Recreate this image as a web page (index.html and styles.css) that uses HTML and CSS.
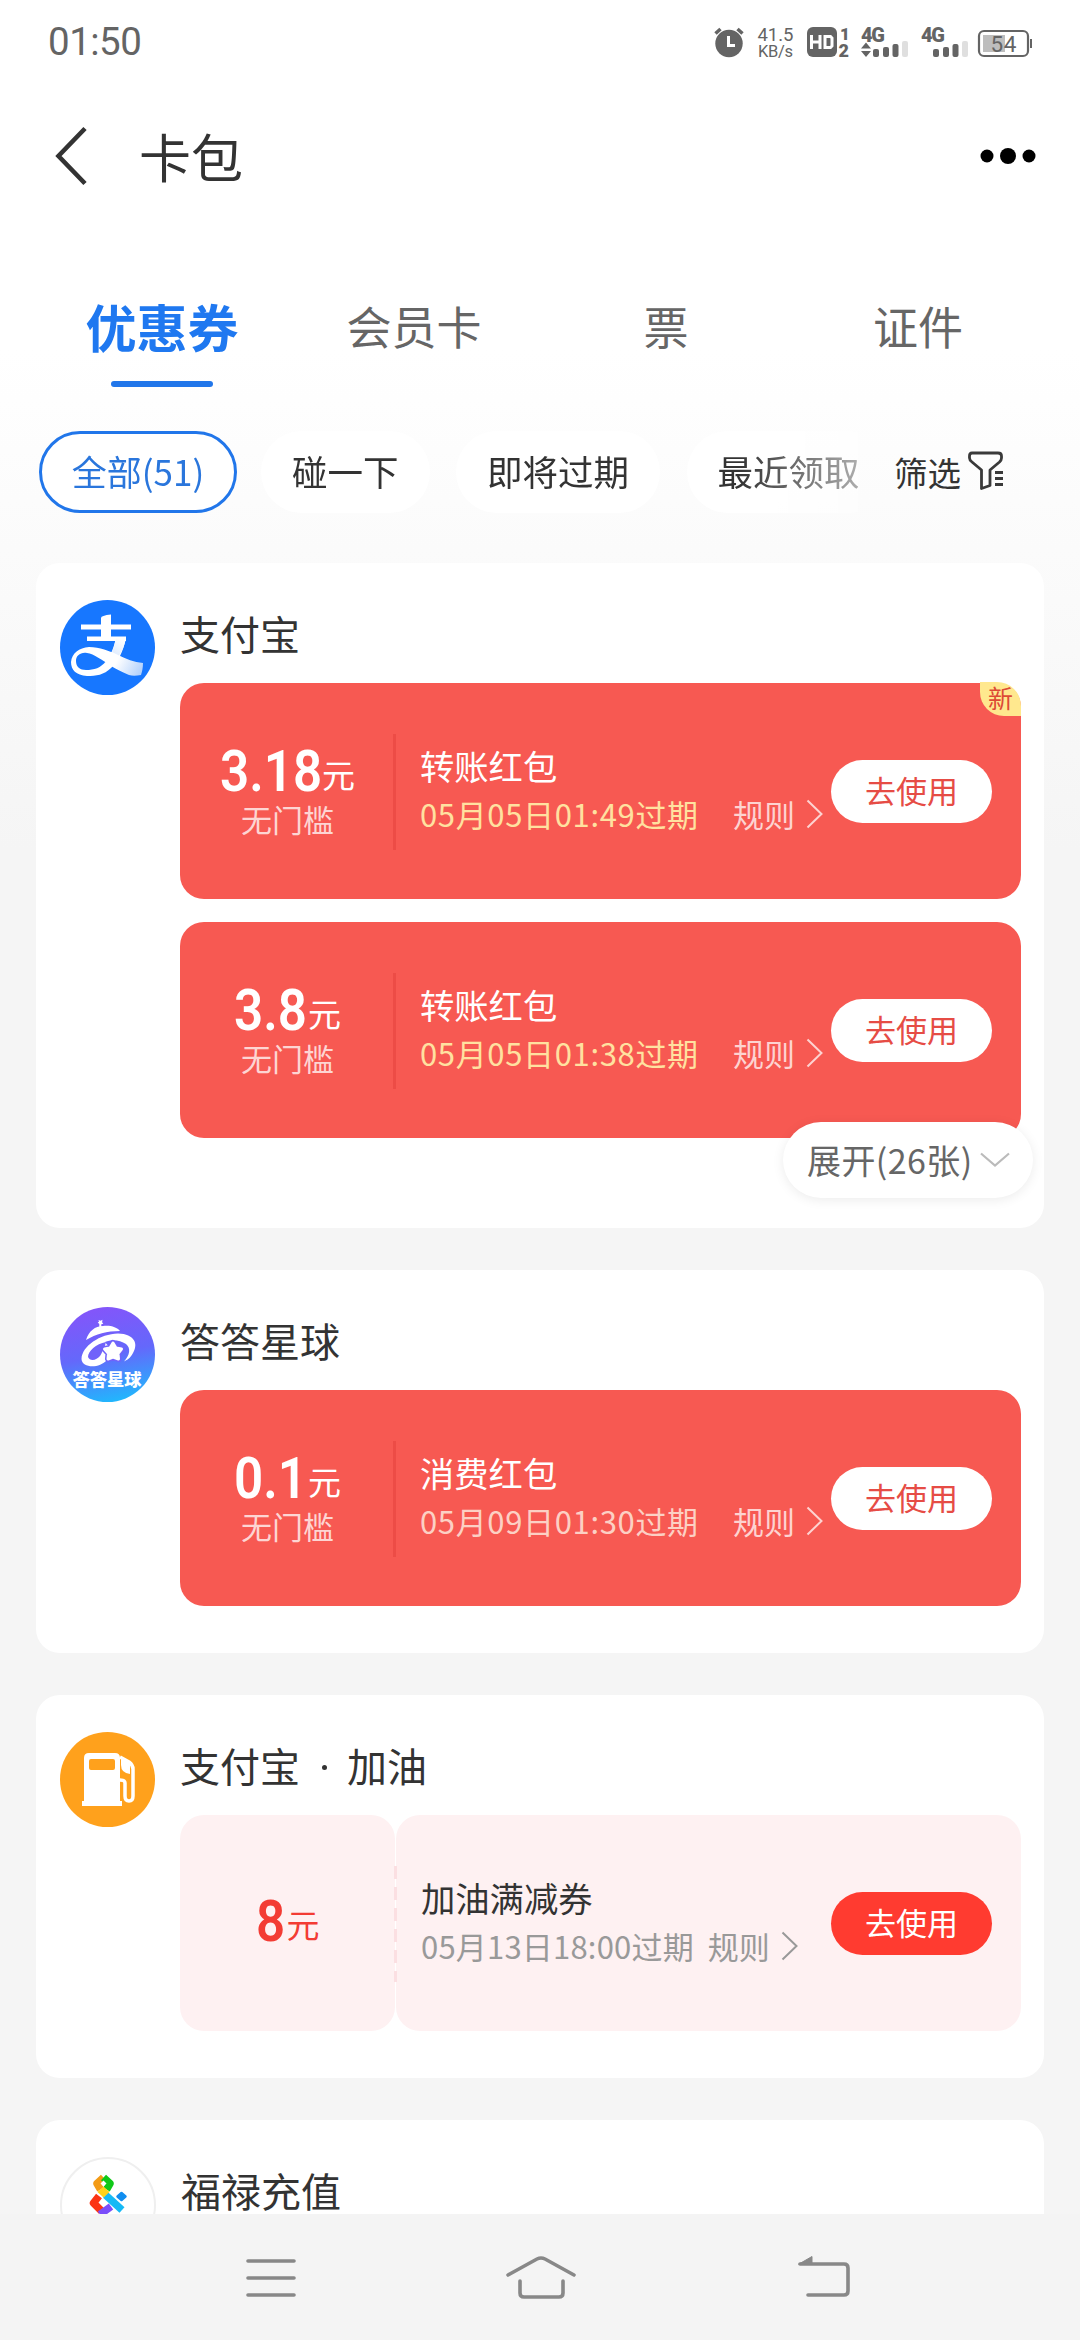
FILE: index.html
```html
<!DOCTYPE html>
<html lang="zh-CN">
<head>
<meta charset="utf-8">
<title>卡包</title>
<link rel="stylesheet" href="styles.css">
</head>
<body>
<div class="screen">
  <div class="statusbar">
    <span class="clock">01:50</span>
    <svg class="status-icons" width="322" height="36" viewBox="712 24 322 36">
      <g fill="#646464">
        <circle cx="729" cy="43.5" r="13.7"/>
        <path d="M715.5 33.5l5-4.500M742.500 33.500l-5-4.500" stroke="#646464" stroke-width="3.500"/>
        <path d="M728.500 36v9.500h6.500" fill="none" stroke="#fff" stroke-width="3"/>
        <text x="757.500" y="41" font-size="18.500" textLength="36">41.5</text>
        <text x="758" y="56.500" font-size="16.500" textLength="35">KB/s</text>
        <rect x="807" y="27" width="30" height="30" rx="6"/>
        <path d="M811.500 35v14M820 35v14M811.500 42h8.500" fill="none" stroke="#fff" stroke-width="3"/>
        <path d="M825 36.500h5.500l1.500 1.500v8l-1.500 1.500H825z" fill="none" stroke="#fff" stroke-width="3"/>
        <text class="heavy" x="840" y="39.500" font-size="17">1</text>
        <text class="heavy" x="838.500" y="56.500" font-size="18">2</text>
        <text class="heavy" x="861" y="41.500" font-size="20" textLength="24">4G</text>
        <path d="M861 48.500l5-6 5 6zM861 51l5 6 5-6z"/>
        <rect x="873" y="49" width="6" height="8" rx="2"/>
        <rect x="883" y="47" width="6" height="10" rx="2"/>
        <rect x="892.500" y="44" width="6" height="13" rx="2"/>
        <rect x="902" y="41" width="6" height="16" rx="2" fill="#dfdfdf"/>
        <text class="heavy" x="921" y="41.500" font-size="20" textLength="24">4G</text>
        <rect x="933" y="49" width="6" height="8" rx="2"/>
        <rect x="943" y="47" width="6" height="10" rx="2"/>
        <rect x="952.500" y="44" width="6" height="13" rx="2"/>
        <rect x="962" y="41" width="6" height="16" rx="2" fill="#dfdfdf"/>
        <rect x="979" y="31" width="49" height="25" rx="5" fill="none" stroke="#646464" stroke-width="2.200"/>
        <rect x="983" y="35" width="22" height="17" fill="#bdbdbd"/>
        <rect x="1030" y="39" width="2" height="9"/>
        <text x="990.500" y="52" font-size="22.500" textLength="26">54</text>
      </g>
    </svg>
  </div>

  <header class="titlebar">
    <svg class="back" width="40" height="60" viewBox="0 0 40 60"><path d="M35 2.500L8.500 30L35 57.500" fill="none" stroke="#333" stroke-width="4.600"/></svg>
    <h1>卡包</h1>
    <svg class="more" width="56" height="18" viewBox="0 0 56 18"><circle cx="7" cy="9" r="6.500"/><circle cx="28" cy="9" r="8"/><circle cx="49" cy="9" r="6.500"/></svg>
  </header>

  <nav class="tabs">
    <div class="tab active">优惠券</div>
    <div class="tab">会员卡</div>
    <div class="tab">票</div>
    <div class="tab">证件</div>
  </nav>

  <div class="filters">
    <div class="chips">
      <div class="chip on">全部(51)</div>
      <div class="chip">碰一下</div>
      <div class="chip">即将过期</div>
      <div class="chip">最近领取</div>
    </div>
    <div class="filter">筛选
      <svg width="38" height="42" viewBox="0 0 38 42" fill="none" stroke="#3a3a3a" stroke-width="2.800"><path d="M5 3h26q3.500 0 3.500 3v2q0 2-2 4L23 20v15.500l-8.500 3V20L5 12Q2.500 10 2.500 8V6Q2.500 3 5 3z" stroke-linejoin="round"/><path d="M28 22.500H36M28 28.500H36M28 34.500H36"/></svg>
    </div>
  </div>

  <main class="list">
    <section class="card with-more">
      <svg class="logo" width="95" height="95" viewBox="0 0 95 95">
        <defs>
          <linearGradient id="tail" x1="40" y1="50" x2="84" y2="74" gradientUnits="userSpaceOnUse"><stop offset="0" stop-color="#fff"/><stop offset=".4" stop-color="#fff"/><stop offset="1" stop-color="#a9cbfb"/></linearGradient>
          <linearGradient id="leg" x1="62" y1="40" x2="40" y2="72" gradientUnits="userSpaceOnUse"><stop offset="0" stop-color="#fff"/><stop offset="1" stop-color="#b5d2fc"/></linearGradient>
        </defs>
        <circle cx="47.500" cy="47.500" r="47.500" fill="#1777ff"/>
        <path d="M41 40.500V18q0-2.500 10-3.500v26zM21 24.500h50v5H21zM27 36.500h39v4.500H27z" fill="#fff"/>
        <path d="M56 38H66C63 52 58 62 51 68C44 75 36 76 27 76C16 75 11 70 11 62C12 53 19 48 29 47C40 47 49 51 58 55C66 59 74 62 83 63C83 68 82 72 81 75C76 76 72 76 69 75C62 72 56 69 51 66C42 60 34 54 27 53C20 52 16 56 16 61C16 67 20 70 26 70C34 70 41 68 46 61C51 55 54 47 56 38Z" fill="url(#tail)"/>
        <path d="M56 38h10q-2.500 12-7 17.500l-7-3.500q2.500-6 4-14z" fill="url(#leg)"/>
      </svg>
      <div class="body">
        <h2>支付宝</h2>
        <div class="coupon red">
          <span class="badge">新</span>
          <div class="value"><div class="amount"><b class="n3">3.18</b>元</div><div class="cond">无门槛</div></div>
          <div class="info"><div class="name">转账红包</div><div class="meta"><span class="date soon">05月05日01:49过期</span><span class="rule">规则<svg width="18" height="30" viewBox="0 0 18 30"><path d="M1.500 1.500L15.500 15l-14 13.500"/></svg></span></div></div>
          <div class="use">去使用</div>
        </div>
        <div class="coupon red">
          <div class="value"><div class="amount"><b class="n2">3.8</b>元</div><div class="cond">无门槛</div></div>
          <div class="info"><div class="name">转账红包</div><div class="meta"><span class="date soon">05月05日01:38过期</span><span class="rule">规则<svg width="18" height="30" viewBox="0 0 18 30"><path d="M1.500 1.500L15.500 15l-14 13.500"/></svg></span></div></div>
          <div class="use">去使用</div>
        </div>
      </div>
      <div class="expand">展开(26张)<svg width="30" height="16" viewBox="0 0 30 16"><path d="M1 1.500L15 13.500L29 1.500" fill="none" stroke="#bbb" stroke-width="2.200"/></svg></div>
    </section>

    <section class="card">
      <svg class="logo" width="95" height="95" viewBox="0 0 95 95">
        <defs><linearGradient id="dd" x1=".4" y1="0" x2=".6" y2="1"><stop offset="0" stop-color="#8455fa"/><stop offset=".5" stop-color="#6468fb"/><stop offset="1" stop-color="#20b8fd"/></linearGradient></defs>
        <circle cx="47.500" cy="47.500" r="47.500" fill="url(#dd)"/>
        <path d="M26 33C29 24 35 19 43 19C50 18 57 20 60 24C47 24 36 27 26 33ZM38.500 13l2 .8 2-1-.4 2.400 1.200 1.600-2 .4v2.800h-2v-3l-1.600-1.400 1.300-.8z" fill="#fff"/>
        <path d="M21.500 52C22 39 40 27 58 26.500C75 27 78 37 73.500 45C71 50 69 52 64 54.500C70 48 71 41 66 37C60 33 52 32 45 35C49 40 54 45 47 53C39 62 22 61 21.500 52Z" fill="#fff"/>
        <path d="M46 35C36 37 28 44 28 50C30 55 37 53 40 49C42 46 42 44 44 42Z" fill="#7063fa"/>
        <path d="M53 36l3 5 5.500 1-3.500 4.500.5 5.500-5.500-2-5 2 .5-5.500-4-4.500 5.500-1z" fill="#fff" stroke="#7063fa" stroke-width="6" stroke-linejoin="round"/>
        <path d="M53 36l3 5 5.500 1-3.500 4.500.5 5.500-5.500-2-5 2 .5-5.500-4-4.500 5.500-1z" fill="#fff" stroke="#fff" stroke-width="3" stroke-linejoin="round"/>
        <text class="logo-text" x="12.500" y="79" textLength="69" lengthAdjust="spacingAndGlyphs">答答星球</text>
      </svg>
      <div class="body">
        <h2>答答星球</h2>
        <div class="coupon red">
          <div class="value"><div class="amount"><b class="n2">0.1</b>元</div><div class="cond">无门槛</div></div>
          <div class="info"><div class="name">消费红包</div><div class="meta"><span class="date">05月09日01:30过期</span><span class="rule">规则<svg width="18" height="30" viewBox="0 0 18 30"><path d="M1.500 1.500L15.500 15l-14 13.500"/></svg></span></div></div>
          <div class="use">去使用</div>
        </div>
      </div>
    </section>

    <section class="card">
      <svg class="logo" width="95" height="95" viewBox="0 0 95 95">
        <circle cx="47.500" cy="47.500" r="47.500" fill="#ffa11c"/>
        <path fill="#fff" fill-rule="evenodd" d="M29 21h26q5 0 5 5v43h2v5H22v-5h2V26q0-5 5-5zm2 6q-2 0-2 2v7q0 2 2 2h22q2 0 2-2v-7q0-2-2-2z"/>
        <path d="M60 25l9 5q4 3 4 7v27q0 5-4 5t-4-5V51q0-3-5-3" fill="none" stroke="#fff" stroke-width="3.500"/>
        <path d="M61 25l9 6v11q-9-1-9-9z" fill="#fff"/>
      </svg>
      <div class="body">
        <h2>支付宝 <i class="dot"></i> 加油</h2>
        <div class="coupon pink">
          <div class="value"><div class="amount"><b class="n1">8</b>元</div></div>
          <div class="info"><div class="name">加油满减券</div><div class="meta"><span class="date">05月13日18:00过期</span><span class="rule">规则<svg width="18" height="30" viewBox="0 0 18 30"><path d="M1.500 1.500L15.500 15l-14 13.500"/></svg></span></div></div>
          <div class="use">去使用</div>
        </div>
      </div>
    </section>

    <section class="card">
      <svg class="logo" width="96" height="96" viewBox="0 0 96 96">
        <circle cx="48" cy="48" r="47" fill="#fff" stroke="#efefef" stroke-width="2"/>
        <g fill="none" stroke-width="7.500" stroke-linejoin="round">
          <path d="M43.500 20.500l-6.500 6 3.500 6" stroke="#f39b16"/>
          <path d="M43.500 20.500l6.500 6-3.500 6" stroke="#10c818"/>
          <path d="M39 39l-5.500 7 8 8" stroke="#fb3413"/>
          <path d="M40 57.500l11-8" stroke="#7a4dfa"/>
          <path d="M45.500 38L62 53" stroke="#15b9f5"/>
          <path d="M43.500 29.500l6 5.500-6 5.500-6-5.500z" fill="#ffd21a"/>
          <path d="M43.500 23.500l3 3-3 3-3-3z" fill="#fff"/>
          <path d="M61.500 36l4 3.500-4 3.500-4-3.500z" fill="#118ef0" stroke="#118ef0" stroke-width="2.500"/>
        </g>
      </svg>
      <div class="body"><h2>福禄充值</h2></div>
    </section>
  </main>

  <footer class="sysnav">
    <svg width="54" height="46" viewBox="244 2253 54 46"><path d="M248 2260h46M248 2277h46M248 2294h46"/></svg>
    <svg class="home" width="74" height="48" viewBox="504 2252 74 48"><path d="M508 2274l29-16q4-2 8 0l29 16M520 2280v12q0 4 4 4h35q4 0 4-4v-12"/></svg>
    <svg width="56" height="46" viewBox="796 2253 56 46"><path d="M800 2263h44q4 0 4 4v23q0 4-4 4h-36"/><path class="tip" d="M799 2263l13-7.500v7.500z"/></svg>
  </footer>
</div>
</body>
</html>
```
FILE: styles.css
```css
* { box-sizing: border-box; }
body {
  margin: 0;
  font-family: "Noto Sans CJK SC", sans-serif;
  color: #333;
}
h1, h2 { margin: 0; font-weight: 400; }
svg { display: block; flex: none; }

.screen {
  width: 1080px;
  height: 2340px;
  overflow: hidden;
  display: flex;
  flex-direction: column;
  background: linear-gradient(#fff 0, #fff 350px, #f5f5f5 850px);
}

/* status bar */
.statusbar {
  height: 84px;
  padding: 0 46px 0 48px;
  display: flex;
  align-items: center;
  justify-content: space-between;
}
.clock {
  font: 400 38.500px/86px Roboto, sans-serif;
  letter-spacing: -.5px;
  color: #646464;
}
.status-icons { font-family: Roboto, sans-serif; }
.heavy { font-weight: 900; }

/* title */
.titlebar {
  height: 144px;
  display: flex;
  align-items: center;
  padding: 0 44px 0 50px;
}
.titlebar h1 {
  margin-left: 49px;
  font-size: 52px;
  line-height: 74px;
}
.more { margin-left: auto; }

/* tabs */
.tabs {
  height: 203px;
  padding: 58px 36px 0;
  display: grid;
  grid-template-columns: repeat(4, 1fr);
}
.tab {
  display: flex;
  flex-direction: column;
  align-items: center;
  font-size: 45px;
  line-height: 80px;
  color: #666;
}
.tab.active {
  font-size: 51px;
  font-weight: 700;
  color: #1f78f0;
}
.tab.active::after {
  content: "";
  width: 102px;
  height: 6px;
  margin-top: 15px;
  border-radius: 3px;
  background: #2176ea;
}

/* filters */
.filters {
  height: 132px;
  padding-left: 39px;
  display: flex;
  align-items: flex-start;
}
.chips {
  width: 819px;
  overflow: hidden;
  display: flex;
  gap: 26.500px;
  -webkit-mask-image: linear-gradient(90deg, #000 700px, rgba(0, 0, 0, .4) 819px);
  mask-image: linear-gradient(90deg, #000 700px, rgba(0, 0, 0, .4) 819px);
}
.chip {
  flex: none;
  height: 82px;
  padding: 0 31px;
  border-radius: 41px;
  background: #fff;
  font-size: 35.500px;
  line-height: 79px;
}
.chip.on {
  width: 198px;
  margin-right: -2.500px;
  padding: 0;
  border: 3px solid #2176ea;
  line-height: 73px;
  text-align: center;
  font-size: 35px;
  color: #2a76dc;
}
.filter {
  display: flex;
  align-items: center;
  gap: 6px;
  margin-left: 36px;
  height: 80px;
  font-size: 33.500px;
}

/* cards */
.list {
  flex: 1;
  min-height: 0;
  overflow: hidden;
  padding: 0 36px;
  display: flex;
  flex-direction: column;
  gap: 42.500px;
}
.card {
  position: relative;
  flex: none;
  display: flex;
  gap: 25px;
  height: 382.500px;
  padding: 0 23px 0 24px;
  border-radius: 24px;
  background: #fff;
}
.card.with-more { height: 664.500px; }
.logo { margin-top: 37px; }
.logo-text {
  font-size: 17px;
  font-weight: 900;
  fill: #fff;
}
.body { flex: 1; }
.body h2 {
  height: 120px;
  padding-top: 41px;
  font-size: 40px;
  line-height: 59px;
}
.dot {
  display: inline-block;
  width: 5px;
  height: 5px;
  margin: 0 11px 12px 13px;
  border-radius: 50%;
  background: #333;
}
.coupon {
  position: relative;
  display: flex;
  height: 216px;
  border-radius: 24px;
}
.coupon + .coupon { margin-top: 23px; }
.red { background: #f75952; color: #fff; }
.value {
  position: relative;
  width: 215px;
  padding-top: 56px;
  display: flex;
  flex-direction: column;
  align-items: center;
}
.value::after {
  content: "";
  position: absolute;
  right: -1px;
  top: 51px;
  width: 3px;
  height: 116px;
  background: #ed4c46;
}
.amount {
  height: 60px;
  line-height: 60px;
  font-size: 33px;
  display: flex;
  align-items: baseline;
}
.amount b {
  font-family: Roboto, sans-serif;
  font-size: 57.500px;
  font-weight: 600;
  transform: translateY(3px) scaleX(.89);
  transform-origin: 0 50%;
}
.n3 { margin-right: -13px; }
.n2 { margin-right: -8px; }
.n1 { margin-right: -2px; }
.cond {
  font-size: 31px;
  line-height: 40px;
  color: #fdd5d3;
}
.info { flex: 1; padding: 58px 0 0 25px; }
.name { font-size: 34.300px; line-height: 48px; }
.meta {
  display: flex;
  justify-content: space-between;
  font-size: 31px;
  line-height: 49px;
  color: #fcd0c4;
}
.date { letter-spacing: .650px; white-space: nowrap; }
.soon { color: #ffe1a0; }
.rule { display: flex; align-items: center; gap: 11px; color: #fdd3d1; }
.rule path { fill: none; stroke: currentColor; stroke-width: 2; }
.use {
  width: 161px;
  height: 63px;
  margin: 77px 29px 0 7px;
  border-radius: 32px;
  background: #fff;
  color: #e64c45;
  font-size: 31px;
  line-height: 60px;
  text-align: center;
}
.badge {
  position: absolute;
  z-index: 1;
  top: -1px;
  right: 0;
  width: 41px;
  height: 34px;
  border-radius: 0 24px 0 24px;
  background: #ffe88e;
  color: #dd4b35;
  font-size: 25px;
  line-height: 30px;
  text-align: center;
}
.expand {
  position: absolute;
  right: 11px;
  bottom: 30px;
  width: 250px;
  height: 76px;
  padding: 0 23px 0 24px;
  display: flex;
  align-items: center;
  justify-content: space-between;
  border-radius: 38px;
  background: #fff;
  box-shadow: 0 2px 12px rgba(0, 0, 0, .08);
  font-size: 34px;
  letter-spacing: .4px;
  color: #666;
}

/* two-part coupon */
.pink { gap: 1px; background: linear-gradient(90deg, transparent 600px, #fef1f2 600px); }
.pink .value { border-radius: 24px; background: #fef1f2; padding-top: 74px; color: #f33c34; }
.pink .value::after {
  right: -2px;
  background: repeating-linear-gradient(#fbdfe2 0, #fbdfe2 13px, transparent 13px, transparent 21px);
}
.pink .info { background: #fef1f2; border-radius: 24px 0 0 24px; }
.pink .name { color: #333; }
.pink .meta { justify-content: flex-start; gap: 14px; color: #999; }
.pink .date { letter-spacing: .2px; }
.pink .rule { color: #999; }
.pink .use { background: #ff3b30; color: #fff; }

/* system navigation */
.sysnav {
  flex: none;
  height: 126.500px;
  padding: 0 228px 0 244px;
  display: flex;
  align-items: center;
  justify-content: space-between;
  background: #f4f4f4;
}
.sysnav .home { margin-right: 12px; }
.sysnav path {
  fill: none;
  stroke: #888;
  stroke-width: 3.600;
  stroke-linecap: round;
  stroke-linejoin: round;
}
.sysnav .tip { fill: #888; stroke-width: 1; }
```
